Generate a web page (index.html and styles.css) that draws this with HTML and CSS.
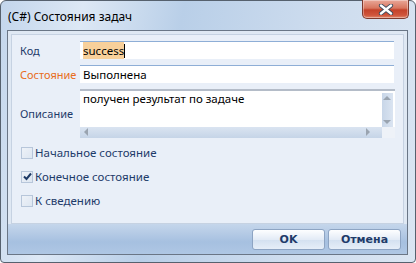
FILE: index.html
```html
<!DOCTYPE html>
<html lang="ru">
<head>
    <meta charset="UTF-8">
    <title>(C#) Состояния задач</title>
    <link rel="stylesheet" href="styles.css">
</head>
<body>

<div class="window">
    <!-- Заголовок окна -->
    <div class="titlebar">
        <span class="title">(C#) Состояния задач</span>
        <div class="close-btn">
            <svg width="16" height="11" viewBox="0 0 16 11">
                <path d="M3 1.5 L13 9.5 M13 1.5 L3 9.5" stroke="#3a4a5c" stroke-width="4.2" stroke-linecap="round"/>
                <path d="M3 1.5 L13 9.5 M13 1.5 L3 9.5" stroke="#fff" stroke-width="2.4" stroke-linecap="round"/>
            </svg>
        </div>
    </div>

    <div class="client">
        <div class="panel">
            <div class="row">
                <label class="label">Код</label>
                <div class="input focused"><span class="sel">success</span><span class="caret"></span></div>
            </div>
            <div class="row">
                <label class="label required">Состояние</label>
                <div class="input">Выполнена</div>
            </div>
            <div class="row memo-row">
                <label class="label">Описание</label>
                <div class="memo">
                    <div class="memo-main">
                        <div class="memo-text">получен результат по задаче</div>
                        <div class="vscroll">
                            <span class="arr up"></span>
                            <span class="arr down"></span>
                        </div>
                    </div>
                    <div class="memo-bottom">
                        <div class="hscroll">
                            <span class="arr left"></span>
                            <span class="arr right"></span>
                        </div>
                        <div class="corner"></div>
                    </div>
                </div>
            </div>

            <div class="checks">
                <div class="check"><span class="box"></span>Начальное состояние</div>
                <div class="check"><span class="box checked">
                    <svg width="9" height="9" viewBox="0 0 9 9"><path d="M1 4.5 L3.5 7 L8 1.5" fill="none" stroke="#1e3a66" stroke-width="2"/></svg>
                </span>Конечное состояние</div>
                <div class="check"><span class="box"></span>К сведению</div>
            </div>
        </div>

        <div class="buttons">
            <button class="btn">OK</button>
            <button class="btn">Отмена</button>
        </div>
    </div>
</div>

</body>
</html>
```

FILE: styles.css
```css
* {
    margin: 0;
    padding: 0;
    box-sizing: border-box;
}

body {
    width: 416px;
    height: 263px;
    overflow: hidden;
    background: #fff;
    font-family: "Noto Sans", "Open Sans", sans-serif;
    font-size: 11px;
}

/* Рамка окна */
.window {
    width: 416px;
    height: 263px;
    border: 1px solid #56616e;
    border-radius: 6px 6px 4px 4px;
    background: linear-gradient(100deg, #c3d6ec 0%, #dde8f5 18%, #b9cfe8 40%, #cddcee 70%, #dae5f2 100%);
    padding: 0 7px 7px 6px;
    display: flex;
    flex-direction: column;
}

.titlebar {
    height: 29px;
    display: flex;
    align-items: flex-start;
    justify-content: space-between;
}

.title {
    font-family: "Noto Sans", sans-serif;
    font-size: 12px;
    color: #000;
    margin-top: 7px;
    margin-left: 1px;
}

.close-btn {
    width: 47px;
    height: 19px;
    margin-top: -1px;
    margin-right: -1px;
    border: 1px solid #7d3a2e;
    border-top: none;
    border-radius: 0 0 5px 5px;
    background: linear-gradient(#e9a899 0%, #d8765f 45%, #c4422a 55%, #d0563c 85%, #e08a6e 100%);
    box-shadow: inset 0 0 0 1px rgba(255, 255, 255, 0.35);
    display: flex;
    align-items: center;
    justify-content: center;
}

/* Рабочая область */
.client {
    flex: 1;
    border: 1px solid #6a7686;
    background: #dfe8f3;
    padding: 3px 3px 0 3px;
    display: flex;
    flex-direction: column;
}

.panel {
    height: 190px;
    background: #e9eff8;
    border: 1px solid #c6d2e2;
    padding: 6px 8px 0 8px;
}

.row {
    display: flex;
    align-items: center;
    margin-bottom: 6px;
}

.label {
    width: 60px;
    color: #1e3b6a;
    font-size: 11px;
}

.label.required {
    color: #e86d20;
}

.input {
    width: 314px;
    height: 18px;
    background: #fff;
    border-top: 1px solid #8eaed6;
    font-size: 11.5px;
    color: #000;
    padding: 0 3px;
    line-height: 17px;
    display: flex;
    align-items: center;
}

.sel {
    background: #f8d09a;
}

.caret {
    width: 1px;
    height: 14px;
    background: #000;
}

/* Поле опису */
.memo-row {
    margin-bottom: 0;
}

.memo {
    width: 315px;
    height: 49px;
    background: #fff;
    border-top: 2px solid #b4bcc8;
    display: flex;
    flex-direction: column;
}

.memo-main {
    flex: 1;
    display: flex;
}

.memo-text {
    flex: 1;
    font-size: 11.5px;
    padding: 0 3px;
    line-height: 15px;
}

.vscroll {
    width: 11px;
    margin-right: 2px;
    margin-top: 2px;
    background: linear-gradient(90deg, #c8d6e8, #dae4f1);
    position: relative;
}

.memo-bottom {
    height: 11px;
    display: flex;
}

.hscroll {
    flex: 1;
    background: linear-gradient(#dae4f1, #c5d4e7);
    position: relative;
}

.corner {
    width: 13px;
    background: #eef2f8;
}

.arr {
    position: absolute;
    width: 0;
    height: 0;
    border: 4px solid transparent;
}

.arr.up {
    top: 3px;
    left: 1px;
    border-bottom: 4px solid #9aa4b0;
    border-top: none;
}

.arr.down {
    bottom: 3px;
    left: 1px;
    border-top: 4px solid #9aa4b0;
    border-bottom: none;
}

.arr.left {
    left: 4px;
    top: 1px;
    border-right: 4px solid #9aa4b0;
    border-left: none;
}

.arr.right {
    right: 12px;
    top: 1px;
    border-left: 4px solid #9aa4b0;
    border-right: none;
}

/* Прапорці */
.checks {
    margin-top: 8px;
    display: flex;
    flex-direction: column;
    gap: 11px;
}

.check {
    display: flex;
    align-items: center;
    color: #1e3b6a;
    font-size: 11.5px;
    height: 13px;
}

.box {
    width: 12px;
    height: 12px;
    margin-left: 1px;
    margin-right: 2px;
    border: 1px solid #b7c6da;
    background: linear-gradient(135deg, #eef2f8, #dde6f1);
    display: flex;
    align-items: center;
    justify-content: center;
}

/* Кнопки */
.buttons {
    flex: 1;
    margin: 0 -3px;
    background: linear-gradient(#c5d6eb, #a6c0e0 60%, #afc7e4);
    display: flex;
    justify-content: flex-end;
    align-items: flex-start;
    gap: 3px;
    padding: 5px 6px 0 0;
}

.btn {
    width: 73px;
    height: 21px;
    border: 1px solid #8da4c3;
    border-radius: 3px;
    background: linear-gradient(#fdfeff, #e3ebf6 50%, #d3e0f0 51%, #e6eef8);
    font-family: "DejaVu Sans", sans-serif;
    font-weight: bold;
    font-size: 11px;
    color: #1e3b6a;
}
```
